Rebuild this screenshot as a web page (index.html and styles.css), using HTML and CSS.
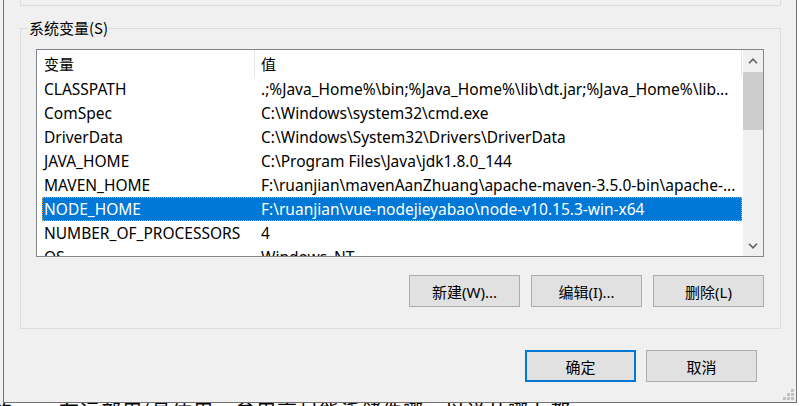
FILE: index.html
```html
<!DOCTYPE html>
<html lang="zh-CN">
<head>
<meta charset="utf-8">
<title>系统变量</title>
<link rel="stylesheet" href="styles.css">
</head>
<body>
<div class="screen">
  <div class="dialog">
    <div class="prev-group"></div>
    <div class="group">
      <div class="group-label">系统变量(S)</div>
      <div class="listbox">
        <div class="list-main">
          <div class="list-head">
            <div class="hcell hname">变量</div>
            <div class="hcell hvalue">值</div>
          </div>
          <div class="row"><span class="name">CLASSPATH</span><span class="value">.;%Java_Home%\bin;%Java_Home%\lib\dt.jar;%Java_Home%\lib...</span></div>
          <div class="row"><span class="name">ComSpec</span><span class="value">C:\Windows\system32\cmd.exe</span></div>
          <div class="row"><span class="name">DriverData</span><span class="value">C:\Windows\System32\Drivers\DriverData</span></div>
          <div class="row"><span class="name">JAVA_HOME</span><span class="value">C:\Program Files\Java\jdk1.8.0_144</span></div>
          <div class="row"><span class="name">MAVEN_HOME</span><span class="value">F:\ruanjian\mavenAanZhuang\apache-maven-3.5.0-bin\apache-...</span></div>
          <div class="row sel"><span class="name">NODE_HOME</span><span class="value">F:\ruanjian\vue-nodejieyabao\node-v10.15.3-win-x64</span></div>
          <div class="row"><span class="name">NUMBER_OF_PROCESSORS</span><span class="value">4</span></div>
          <div class="row"><span class="name">OS</span><span class="value">Windows_NT</span></div>
        </div>
        <div class="vscroll">
          <div class="sb-btn"><svg width="10" height="6" viewBox="0 0 10 6"><polyline points="1,5.2 5,1.2 9,5.2" fill="none" stroke="#606060" stroke-width="1.6"/></svg></div>
          <div class="sb-thumb"></div>
          <div class="sb-track"></div>
          <div class="sb-btn"><svg width="10" height="6" viewBox="0 0 10 6"><polyline points="1,0.8 5,4.8 9,0.8" fill="none" stroke="#606060" stroke-width="1.6"/></svg></div>
        </div>
      </div>
      <div class="btn-row">
        <button class="btn">新建(W)...</button>
        <button class="btn">编辑(I)...</button>
        <button class="btn">删除(L)</button>
      </div>
    </div>
    <div class="dlg-buttons">
      <button class="btn btn-default">确定</button>
      <button class="btn">取消</button>
    </div>
    <svg class="grip" width="11" height="11" viewBox="0 0 11 11">
      <rect x="8" y="0" width="3" height="3" fill="#c2c2c2"/>
      <rect x="4" y="4" width="3" height="3" fill="#c2c2c2"/>
      <rect x="8" y="4" width="3" height="3" fill="#c2c2c2"/>
      <rect x="0" y="8" width="3" height="3" fill="#c2c2c2"/>
      <rect x="4" y="8" width="3" height="3" fill="#c2c2c2"/>
      <rect x="8" y="8" width="3" height="3" fill="#c2c2c2"/>
    </svg>
  </div>
  <div class="behind-text">的npm在远部用(具体用，参用高材能泛储件哪，以说从哪卜都</div>
</div>
</body>
</html>
```

FILE: styles.css
```css
* {
  box-sizing: border-box;
}

html,
body {
  margin: 0;
  padding: 0;
  overflow: hidden;
}

body {
  background: #ffffff;
  font-family: "Noto Sans", "Noto Sans CJK SC", sans-serif;
  font-size: 15px;
  color: #000;
}

.screen {
  width: 802px;
  height: 406px;
  overflow: hidden;
  background: linear-gradient(to right, #f2f2f2 0, #f2f2f2 3px, #ffffff 3px);
}

.dialog {
  position: relative;
  margin-left: 3px;
  width: 794px;
  height: 403px;
  background: #f0f0f0;
  border: 1px solid #727272;
  border-top: 0;
}

.prev-group {
  margin-left: 16px;
  width: 761px;
  height: 6px;
  border: 1px solid #dcdcdc;
  border-top: 0;
}

.group {
  margin: 22px 0 0 16px;
  width: 761px;
  height: 301px;
  border: 1px solid #dcdcdc;
}

.group-label {
  width: fit-content;
  margin: -11px 0 0 7px;
  padding: 0 1px;
  line-height: 20px;
  background: #f0f0f0;
  font-family: "Noto Sans CJK SC", sans-serif;
}

.listbox {
  display: flex;
  margin: 11px 0 0 15px;
  width: 728px;
  height: 208px;
  border: 1px solid #828790;
  background: #ffffff;
}

.list-main {
  width: 706px;
  overflow: hidden;
}

.list-head {
  display: flex;
  height: 27px;
}

.hcell {
  height: 27px;
  line-height: 28px;
  border-right: 1px solid #e5e5e5;
  font-family: "Noto Sans CJK SC", sans-serif;
}

.hname {
  width: 218px;
  padding-left: 7px;
}

.hvalue {
  width: 487px;
  padding-left: 6px;
}

.row {
  display: flex;
  align-items: center;
  margin-left: 5px;
  width: 700px;
  height: 24px;
  white-space: nowrap;
  font-size: 15.5px;
}

.row .name {
  width: 219px;
  padding-left: 2px;
  flex: none;
}

.row .value {
  flex: 1;
  overflow: hidden;
  padding-right: 2px;
}

.row.sel {
  background: #0078d7;
  color: #ffffff;
  outline: 1px dotted #f0a040;
  outline-offset: -1px;
}

.vscroll {
  display: flex;
  flex-direction: column;
  width: 20px;
  background: #f0f0f0;
}

.sb-btn {
  height: 21px;
  display: flex;
  align-items: center;
  justify-content: center;
  flex: none;
}

.sb-thumb {
  margin-top: 1px;
  height: 58px;
  background: #cdcdcd;
  flex: none;
}

.sb-track {
  flex: 1;
}

.btn-row {
  display: flex;
  justify-content: flex-end;
  gap: 11px;
  margin-top: 18px;
  padding-right: 16px;
}

.btn {
  width: 111px;
  height: 32px;
  padding: 0;
  background: #e1e1e1;
  border: 1px solid #adadad;
  font-family: "Noto Sans", "Noto Sans CJK SC", sans-serif;
  font-size: 15px;
  color: #000;
}

.btn-default {
  border: 2px solid #0078d7;
}

.dlg-buttons {
  display: flex;
  justify-content: flex-end;
  gap: 10px;
  margin-top: 21px;
  padding-right: 39px;
}

.grip {
  position: absolute;
  right: 2px;
  bottom: 2px;
}

.behind-text {
  margin: -2px 0 0 -8px;
  font-family: "Noto Sans CJK SC", sans-serif;
  font-size: 20px;
  line-height: 20px;
  white-space: nowrap;
  letter-spacing: 1px;
}
```
